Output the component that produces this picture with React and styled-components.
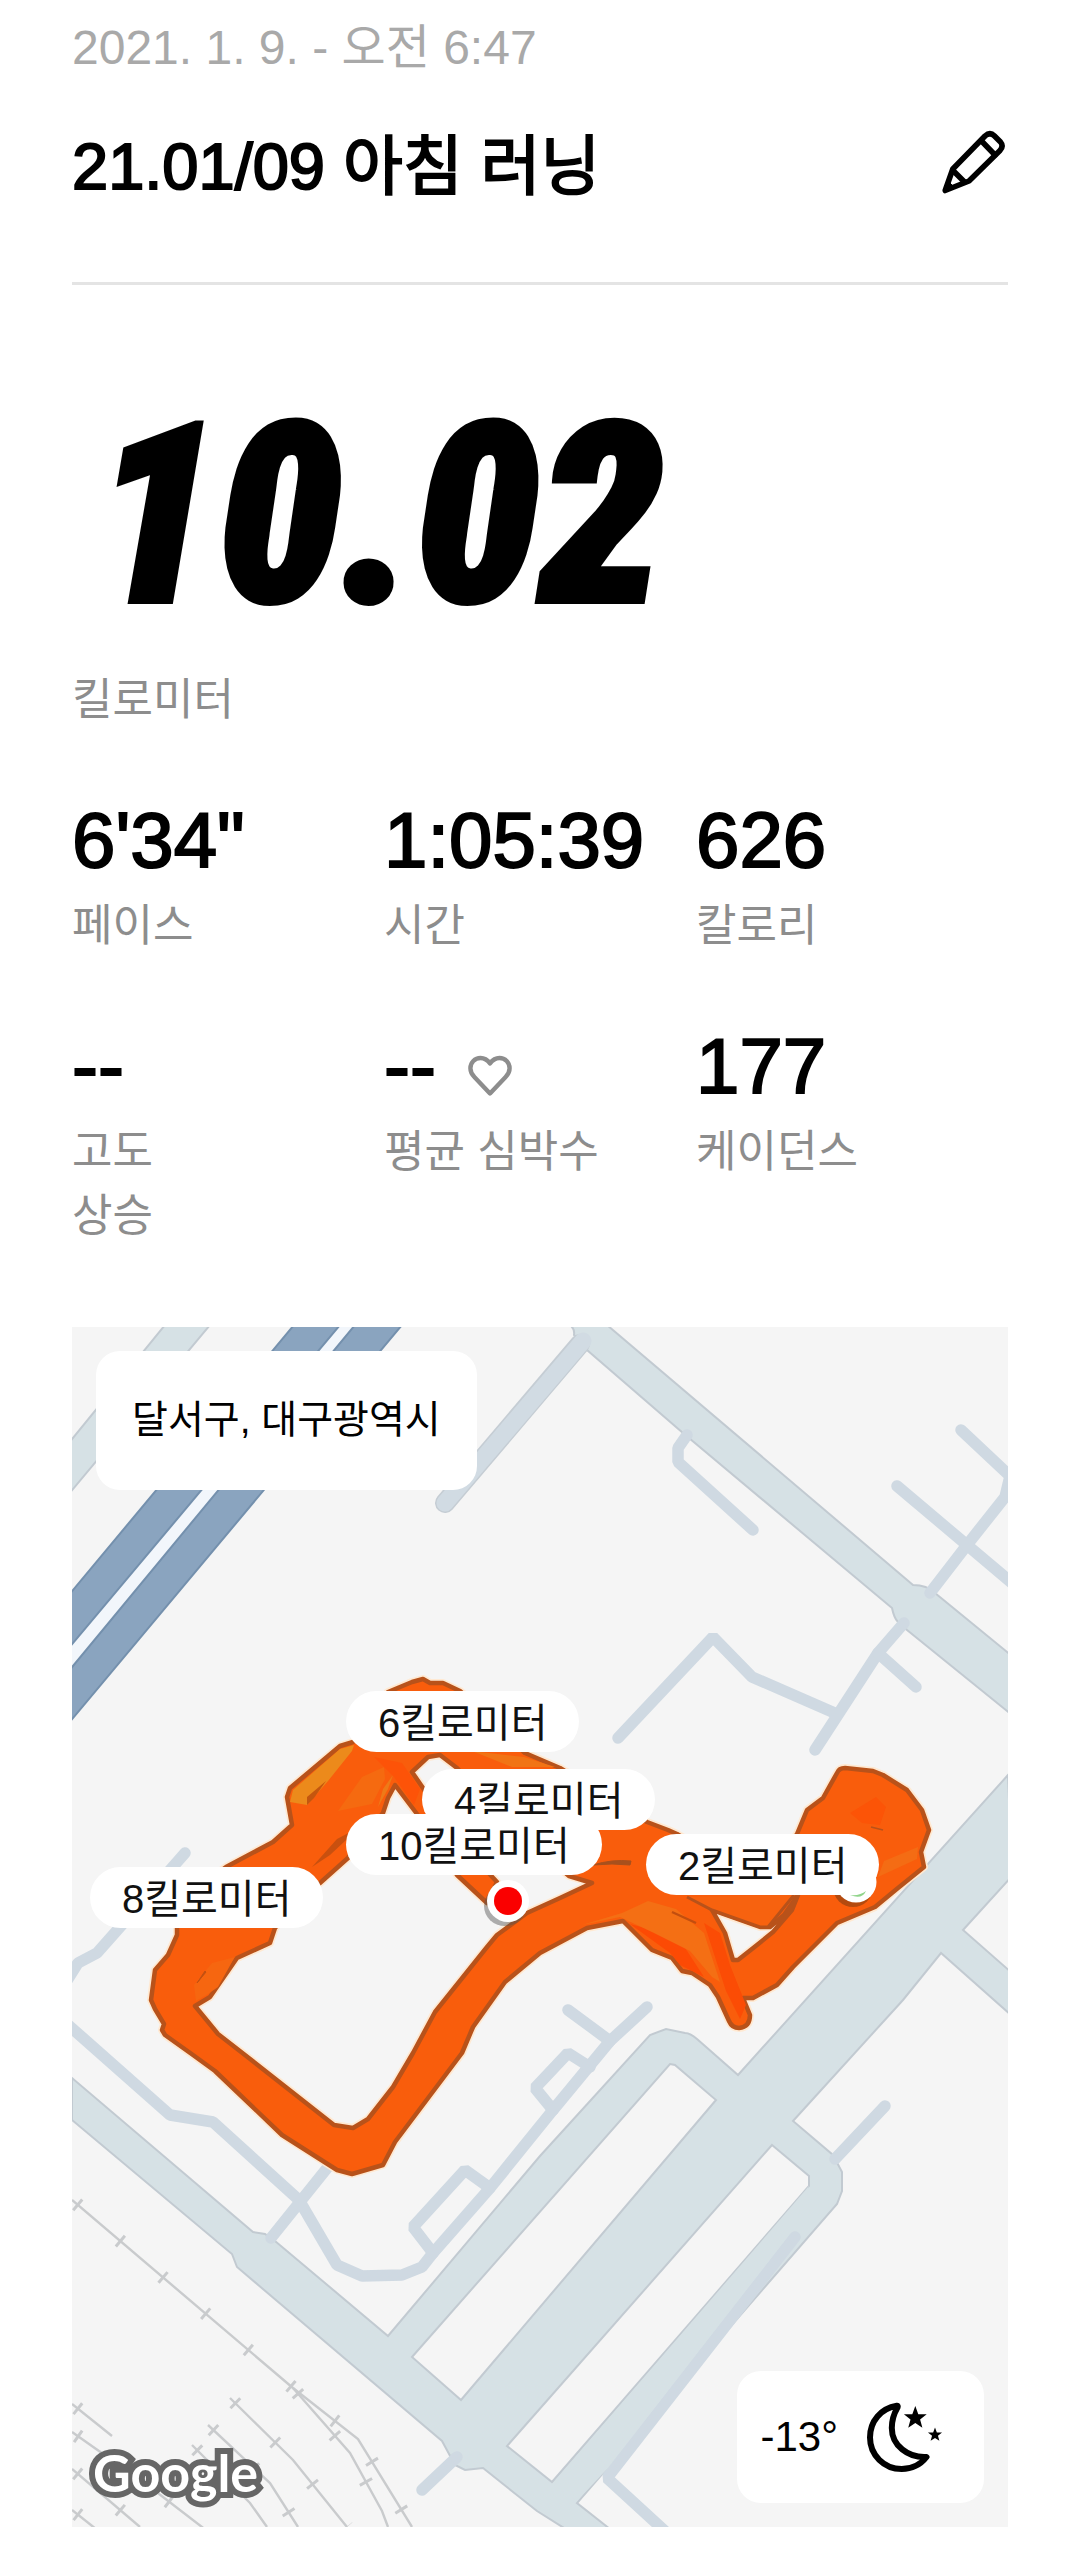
import styled, { createGlobalStyle } from 'styled-components';

const GlobalStyle = createGlobalStyle`
  * {
    box-sizing: border-box;
  }

  body {
    margin: 0;
    background: #fff;
    color: #000;
    font-family: 'Liberation Sans', 'Noto Sans CJK KR', sans-serif;
  }
`;

const Page = styled.main`
  padding: 20px 72px 28px;
`;

const RunDate = styled.p`
  margin: 0;
  font-size: 48px;
  line-height: 56px;
  color: #a9a9a9;
`;

const TitleRow = styled.header`
  display: flex;
  align-items: flex-start;
  justify-content: space-between;
  padding: 51px 0 75px;
  border-bottom: 3px solid #e4e4e4;
`;

const Title = styled.h1`
  margin: 0;
  font-size: 65px;
  font-weight: 400;
  line-height: 80px;
  -webkit-text-stroke: 2px currentColor;
`;

const EditButton = styled.button`
  display: flex;
  padding: 0;
  border: 0;
  background: none;
  color: inherit;
  cursor: pointer;
`;

const Distance = styled.section`
  padding: 111px 0 64px;
`;

const DistanceValue = styled.div`
  padding-left: 22px;
  margin-bottom: 32px;
  font-family: 'Roboto Condensed', Roboto, sans-serif;
  font-size: 250px;
  font-style: italic;
  font-weight: 900;
  line-height: 240px;
  -webkit-text-stroke: 6px currentColor;
`;

const Label = styled.div`
  font-size: 44px;
  line-height: 64px;
  color: #8d8d8d;
  white-space: pre-line;
`;

const Stats = styled.section`
  display: grid;
  grid-template-columns: repeat(3, 1fr);
  row-gap: 64px;
  margin-bottom: 79px;
`;

const StatValue = styled.div`
  display: flex;
  align-items: center;
  gap: 32px;
  margin-bottom: 10px;
  font-size: 78px;
  line-height: 88px;
  -webkit-text-stroke: 2px currentColor;

  svg {
    margin-top: 20px;
  }
`;

const Map = styled.section`
  position: relative;
  overflow: hidden;
  background: #f5f5f5;
`;

const MapSvg = styled.svg`
  display: block;
  width: 100%;
  height: auto;
`;

const Place = styled.div`
  position: absolute;
  top: 24px;
  left: 24px;
  padding: 37px 36px 38px;
  border-radius: 24px;
  background: #fff;
  font-size: 39px;
  line-height: 64px;
`;

const Weather = styled.div`
  position: absolute;
  right: 24px;
  bottom: 24px;
  display: flex;
  align-items: center;
  gap: 28px;
  padding: 31px 40px 31px 24px;
  border-radius: 24px;
  background: #fff;
  font-size: 42px;
  line-height: 64px;
`;

const Pin = styled.div`
  position: absolute;
  left: ${p => (p.$x / 936) * 100}%;
  top: ${p => (p.$y / 1200) * 100}%;
  padding: 4px 32px 0;
  border-radius: 31px;
  background: #fff;
  color: #111;
  font-size: 40px;
  line-height: 57px;
`;

const stats = [
  { value: `6'34"`, label: '페이스' },
  { value: '1:05:39', label: '시간' },
  { value: '626', label: '칼로리' },
  { value: '--', label: '고도\n상승' },
  { value: '--', label: '평균 심박수', heart: true },
  { value: '177', label: '케이던스' },
];

const pins = [
  { text: '4킬로미터', x: 350, y: 442 },
  { text: '6킬로미터', x: 274, y: 364 },
  { text: '10킬로미터', x: 274, y: 487 },
  { text: '8킬로미터', x: 18, y: 540 },
  { text: '2킬로미터', x: 574, y: 507 },
];

const lanes = [
  'M615 108 606 121V135L681 203',
  'M889 103 938 149 933 170 895 218 858 266',
  'M825 159 940 256',
  'M546 411 641 310 680 350 765 387',
  'M743 423 806 326 832 296',
  'M806 326 844 360',
  'M113 526 56 591 25 626 6 636-6 655',
  'M-6 696 98 788 141 795 227 873 265 938 290 949 330 948 350 940 361 926 418 861 481 783 538 714 575 680',
  'M260 835 199 911',
  'M361 926 341 900 393 843 418 861',
  'M481 783 463 761 496 726 518 740',
  'M496 683 538 714',
  'M813 779 763 832',
  'M723 910 535 1151 595 1206',
  'M385 1130 350 1163',
];

const rails = [
  'M0 873 221 1061 286 1112 340 1200',
  'M221 1061 278 1126 310 1184 316 1200',
  'M158 1071 221 1133 275 1200',
  'M136 1098 198 1156 226 1200',
  'M120 1118 178 1176 195 1200',
  'M0 1077 40 1109',
  'M0 1105 78 1160 143 1210',
  'M0 1142 68 1200',
  'M0 1183 24 1202',
];

const mainRoad =
  'M936 448 666 748 625 712Q618 706 613 706L594 702 578 708 468 829 316 1009 203 914 193 907 181 905 0 751V793L160 927 165 940 370 1114 383 1138 393 1143 411 1141 465 1184 500 1206H543L505 1176 765 877 770 864V845L761 828 721 794 831 673 869 626 940 689V646L891 603 940 549Z' +
  'M598 737 603 738 644 773 389 1073 340 1030Z' +
  'M700 818 737 849V859L480 1155 435 1119Z';

const route =
  'M316 365 340 355 351 352 358 356 371 356 388 364 453 426 488 441 575 495 596 503 605 507 650 535 705 535 725 507 735 483 751 471 765 446Q767 441 773 441L801 444 811 448 835 463 850 483 857 503 849 525 852 540 826 561 803 580 765 596 721 640 705 658 681 671 671 671 678 688Q678 700 667 701 660 701 657 694L646 670 638 658 620 646 610 644 600 631 580 623 551 594 515 601 468 626 433 655 401 700 390 726 323 815 311 838 280 847 265 843 210 808 143 744 121 728 93 708 90 703 92 697 83 682 79 673 83 643 96 628 105 608 105 600 120 565 154 540 201 515 220 498 215 470 218 461 268 419 281 415 300 390Z' +
  'M340 445 356 430 368 428 385 441 440 500 497 549 520 556 488 571 455 586 425 608 415 620 363 685 341 726 321 760 296 792 281 801 262 798 173 728 146 707 123 679 138 670 165 631 198 616 203 601 225 575 248 556 276 531 311 486 316 471 323 458 345 487 385 548 415 576 425 555 385 512 351 461Z' +
  'M640 583 688 600H698L712 588 726 568 720 583 701 605 685 618 666 633H661L653 606Z';

const star = 'M0-1 .25-.32.95-.31.4.13.59.81 0 .42-.59.81-.4.13-.95-.31-.25-.32Z';

function PencilIcon() {
  return (
    <svg width="66" height="70" viewBox="0 0 66 70" fill="none" stroke="currentColor" strokeWidth="5.6" strokeLinejoin="round" strokeLinecap="round">
      <path d="M3.2 63.5 10.8 42 43 9Q48 4.5 52.5 9L58.5 15Q62 19 58 23.5L27 54Z" />
      <path d="M39.5 14 53 28M11 43.5 22.5 55" />
      <path d="M3.5 63 8 56 12 60Z" fill="currentColor" strokeWidth="1" />
    </svg>
  );
}

function HeartIcon() {
  return (
    <svg width="44" height="42" viewBox="0 0 44 42" fill="none" stroke="#8d8d8d" strokeWidth="4.4" strokeLinejoin="round">
      <path d="M22 8.4C19.5 5 16.5 3 12.5 3 6.8 3 2.4 7.5 2.4 13.2 2.4 17 4 19.6 6.6 22.2L22 38.4 37.4 22.2C40 19.6 41.6 17 41.6 13.2 41.6 7.5 37.2 3 31.5 3 27.5 3 24.5 5 22 8.4Z" />
    </svg>
  );
}

function MoonIcon() {
  return (
    <svg width="78" height="70" viewBox="0 0 78 70">
      <path
        d="M30.8 3.8C15 6.5 4 19 4 35.5 4 53 18 67 35.7 67 46 67 55 62 60.5 55 42 56 25.8 43.5 25.8 26 25.8 17.5 28 11.5 31.5 5.5Q32.3 3.6 30.8 3.8Z"
        fill="none"
        stroke="currentColor"
        strokeWidth="6"
        strokeLinejoin="round"
      />
      <path d={star} transform="translate(49.3 16) scale(12)" />
      <path d={star} transform="translate(69 32.8) scale(7.4)" />
    </svg>
  );
}

function RunMap() {
  return (
    <MapSvg viewBox="0 0 936 1200" fill="none" role="img" aria-label="러닝 경로">
      <g stroke="#c9cbcd">
        {rails.map(d => (
          <g key={d}>
            <path d={d} strokeWidth="2.4" />
            <path d={d} strokeWidth="14" strokeDasharray="3 53" strokeDashoffset="-6" />
          </g>
        ))}
      </g>

      {/* highway */}
      <path d="M221 0H329L0 392V263Z" fill="#f2f6fb" />
      <g fill="#8aa4bf" stroke="#7490ad" strokeWidth="2">
        <path d="M222-2H268L-4 322V269Z" />
        <path d="M283-2H330L-4 397V345Z" />
      </g>

      <g fill="#d6e1e5" stroke="#c2cad1" strokeWidth="2">
        <path d="M93-2H138L-4 168V117Z" />
        <path d="M498-2Q503 2 502 8L515 23 611 106 820 281Q822 291 826 295L835 303 940 388V329L863 266Q855 258 841 258L535-2Z" />
        <path d={mainRoad} fillRule="evenodd" />
      </g>
      <path d="M508 17 373 176" stroke="#c5cdd4" strokeWidth="20" strokeLinecap="round" />
      <path d="M511 14 373 176" stroke="#d1dbe3" strokeWidth="17" strokeLinecap="round" />

      <g stroke="#cfd9e2" strokeWidth="11.5" strokeLinecap="round" strokeLinejoin="bevel">
        {lanes.map(d => <path key={d} d={d} />)}
      </g>
      <path d="M723 900 536 1141 505 1174 480 1157 737 859Z" fill="#d6e1e5" />

      <path d={route} fill="#f95d0c" stroke="#ffe9d2" strokeWidth="8" fillRule="evenodd" strokeLinejoin="round" />
      <path d={route} fill="#f95d0c" stroke="#b8521a" strokeWidth="4.5" fillRule="evenodd" strokeLinejoin="round" />
      <path d="M282 418 268 422 221 463 218 475 235 478 256 454 280 424Z" fill="#ec8a1b" />
      <path d="M235 478 235 470 254 454 242 471Z" fill="#c4560f" />
      <path d="M312 440 290 450 266 484 300 477 313 452Z" fill="#f56a10" />
      <path d="M321 448 311 462 306 480 316 462Z" fill="#ee7a18" />
      <path d="M240 540 265 512 288 500 258 528Z" fill="#c9500f" />
      <path d="M400 424 452 430 483 440 440 440Z" fill="#f17415" />
      <path d="M302 430 330 436 348 462 342 478 322 450Z" fill="#fd5308" />
      <path d="M163 630 165 626 146 660 136 667 124 674 122 658 140 636Z" fill="#f66610" />
      <path d="M125 656 133 644 134 645Z" fill="#b8521a" stroke="#c4500f" />
      <path d="M558 597 606 610 632 650 618 643 608 638 598 626Z" fill="#fc4a04" />
      <path d="M510 598 550 586 576 574 604 582 632 606 648 655 640 650 618 624 582 606 548 590Z" fill="#f46f14" />
      <path d="M632 596 648 606 658 638 674 678 668 692 654 664Z" fill="#fb4c05" />
      <path d="M600 585 624 596" stroke="#c24e0f" strokeWidth="2.4" />
      <path d="M521 538Q540 532 559 534L558 538 540 537Z" fill="#a8501d" stroke="#a8501d" />
      <path d="M615 570 640 583 688 600H696L722 568" fill="#f7620f" stroke="#b8521a" strokeWidth="3" />
      <path d="M778 486 804 470 814 480 808 498 790 496Z" fill="#ff4a02" opacity=".45" />
      <path d="M846 520 812 534 806 550 845 532Z" fill="#f46c14" />
      <path d="M799 500 811 503" stroke="#b8521a" strokeWidth="1.6" />

      {/* start and finish markers */}
      <circle cx="781" cy="560" r="20" fill="#7a3a12" opacity=".55" />
      <circle cx="784" cy="555" r="20.5" fill="#fff" />
      <path d="M778 568Q788 569 794 564 790 573 778 568Z" fill="#8fd48a" />
      <ellipse cx="433" cy="579" rx="21" ry="20" fill="#555" opacity=".45" />
      <circle cx="436" cy="574" r="21" fill="#fff" />
      <circle cx="436" cy="574" r="14" fill="#fa0000" />

      <text
        x="21"
        y="1165"
        fontFamily="Lato, sans-serif"
        fontSize="52"
        fontWeight="700"
        fill="#fff"
        stroke="#666"
        strokeWidth="12"
        paintOrder="stroke"
      >
        Google
      </text>
    </MapSvg>
  );
}

export default function App() {
  return (
    <>
      <GlobalStyle />
      <Page>
        <RunDate>2021. 1. 9. - 오전 6:47</RunDate>
        <TitleRow>
          <Title>21.01/09 아침 러닝</Title>
          <EditButton type="button" aria-label="제목 편집">
            <PencilIcon />
          </EditButton>
        </TitleRow>

        <Distance>
          <DistanceValue>10.02</DistanceValue>
          <Label>킬로미터</Label>
        </Distance>

        <Stats>
          {stats.map(stat => (
            <div key={stat.label}>
              <StatValue>
                {stat.value}
                {stat.heart && <HeartIcon />}
              </StatValue>
              <Label>{stat.label}</Label>
            </div>
          ))}
        </Stats>

        <Map>
          <RunMap />
          {pins.map(pin => (
            <Pin key={pin.text} $x={pin.x} $y={pin.y}>{pin.text}</Pin>
          ))}
          <Place>달서구, 대구광역시</Place>
          <Weather>
            -13°
            <MoonIcon />
          </Weather>
        </Map>
      </Page>
    </>
  );
}
